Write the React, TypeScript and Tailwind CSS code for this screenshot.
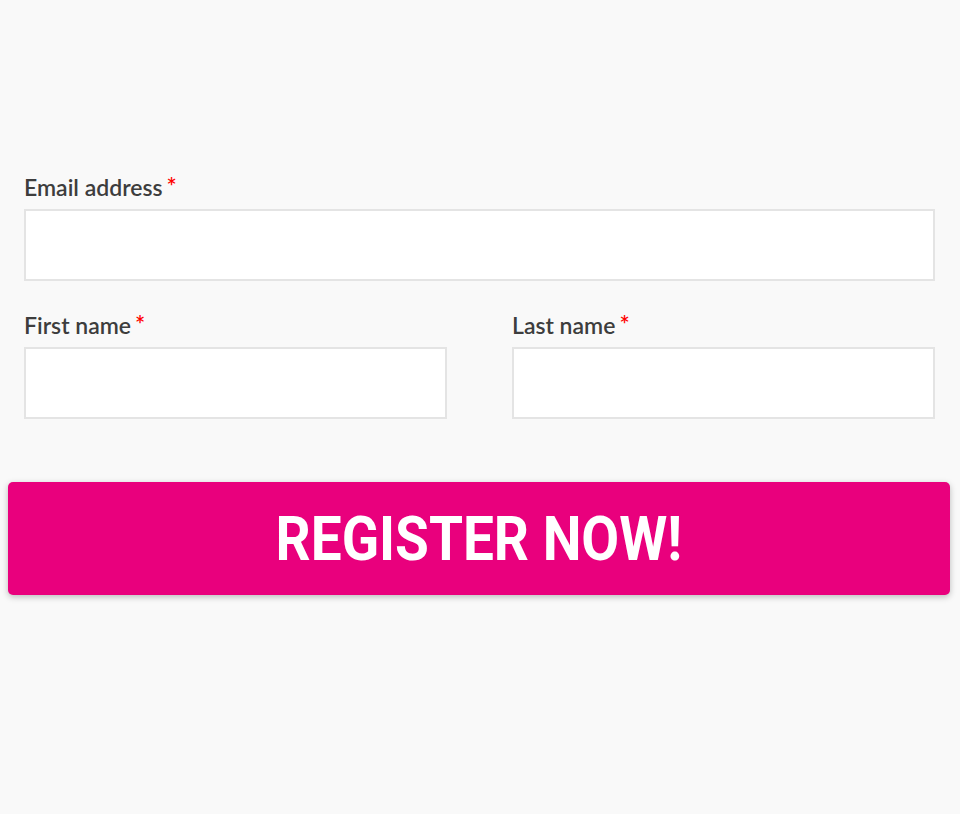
import React from "react";

function Label({ text }: { text: string }) {
  return (
    <label className="block text-[23px] leading-[26px] text-[#3d3d3d] mb-[9px]" style={{ fontFamily: "Lato, 'Noto Sans', sans-serif", fontWeight: 600 }}>
      {text}
      <span className="text-[#ff0000] ml-[4px] text-[24px]">*</span>
    </label>
  );
}

function Input() {
  return <input className="block w-full h-[72px] bg-white border-2 border-[#e4e4e4] outline-none" />;
}

export default function App() {
  return (
    <div className="min-h-[814px] w-[960px] bg-[#f9f9f9]">
      <div className="pt-[174px] px-[24px] pr-[25px]">
        <div>
          <Label text="Email address" />
          <Input />
        </div>
        <div className="grid grid-cols-2 gap-x-[65px] mt-[31px]">
          <div>
            <Label text="First name" />
            <Input />
          </div>
          <div>
            <Label text="Last name" />
            <Input />
          </div>
        </div>
      </div>
      <div className="px-[8px] pr-[10px] mt-[63px]">
        <button className="w-full h-[113px] rounded-[5px] bg-[#e9007d] text-white shadow-[0_2px_6px_rgba(0,0,0,0.25)] flex items-center justify-center">
          <span className="inline-block text-[61px] font-bold scale-x-90 translate-y-[1px]" style={{ fontFamily: "Roboto, 'Liberation Sans', sans-serif" }}>REGISTER NOW!</span>
        </button>
      </div>
    </div>
  );
}
